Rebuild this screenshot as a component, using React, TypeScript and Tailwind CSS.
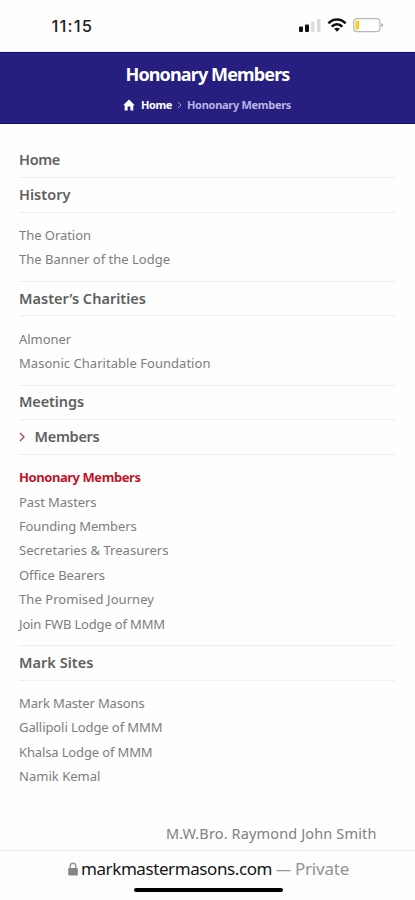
import { useLayoutEffect, useRef, useState } from "react";

type Item = { label: string; width: number };
type Section = Item & { current?: boolean; items?: (Item & { active?: boolean })[] };

/* A single line of text whose tracking is adjusted to fill the given width. */
function Line({ label, width, className = "" }: Item & { className?: string }) {
  const ref = useRef<HTMLSpanElement>(null);
  const [spacing, setSpacing] = useState(0);
  useLayoutEffect(() => {
    const el = ref.current;
    if (!el) return;
    el.style.letterSpacing = "0px";
    const natural = el.getBoundingClientRect().width;
    const next = (width - natural) / label.length;
    el.style.letterSpacing = `${next}px`;
    setSpacing(next);
  }, [label, width]);
  return (
    <span ref={ref} className={`inline-block whitespace-nowrap ${className}`} style={{ letterSpacing: `${spacing}px` }}>
      {label}
    </span>
  );
}

const sections: Section[] = [
  { label: "Home", width: 41 },
  {
    label: "History",
    width: 51.5,
    items: [
      { label: "The Oration", width: 72 },
      { label: "The Banner of the Lodge", width: 151 },
    ],
  },
  {
    label: "Master’s Charities",
    width: 127,
    items: [
      { label: "Almoner", width: 52 },
      { label: "Masonic Charitable Foundation", width: 191.5 },
    ],
  },
  { label: "Meetings", width: 65 },
  {
    label: "Members",
    width: 65,
    current: true,
    items: [
      { label: "Hononary Members", width: 121.5, active: true },
      { label: "Past Masters", width: 77.5 },
      { label: "Founding Members", width: 117.5 },
      { label: "Secretaries & Treasurers", width: 149.5 },
      { label: "Office Bearers", width: 86 },
      { label: "The Promised Journey", width: 135 },
      { label: "Join FWB Lodge of MMM", width: 146 },
    ],
  },
  {
    label: "Mark Sites",
    width: 74.5,
    items: [
      { label: "Mark Master Masons", width: 125.5 },
      { label: "Gallipoli Lodge of MMM", width: 143.5 },
      { label: "Khalsa Lodge of MMM", width: 133.5 },
      { label: "Namik Kemal", width: 81.5 },
    ],
  },
];

function StatusBar() {
  return (
    <div className="flex h-[52px] shrink-0 justify-between border-b border-[#ededf2] pr-[31px] pl-[51.5px]">
      <div className="mt-[15px] h-6 font-['Inter',sans-serif] text-[16.5px] leading-[22px] font-medium text-[#202020]">
        <Line label="11:15" width={41.5} />
      </div>
      <div className="mt-[17px] flex h-4 gap-[6px]">
        <svg width="22" height="16" viewBox="0 0 22 16">
          <rect x="0" y="9.5" width="4" height="5.5" rx="1" fill="#111" />
          <rect x="6" y="7.5" width="4" height="7.5" rx="1" fill="#111" />
          <rect x="12" y="4.5" width="3.5" height="10.5" rx="1" fill="#dedede" />
          <rect x="18" y="2" width="3.5" height="13" rx="1" fill="#dadada" />
        </svg>
        <svg width="20" height="16" viewBox="0 0 20 16" fill="none" stroke="#111" strokeWidth="2.6">
          <path d="M1.4 6.3C6.2 1.2 13.8 1.2 18.6 6.3" />
          <path d="M4.7 9.7C7.8 6.6 12.2 6.6 15.3 9.7" />
          <path d="M10 14.7L7.2 11.8C8.8 10.4 11.2 10.4 12.8 11.8Z" fill="#111" stroke="none" />
        </svg>
        <svg width="31" height="16" viewBox="0 0 31 16">
          <rect x="0.7" y="1.6" width="26.2" height="13" rx="3.4" fill="#fff" stroke="#b9b9b4" strokeWidth="1.2" />
          <rect x="2.3" y="3.7" width="4" height="8.8" rx="1.3" fill="#f5cf35" />
          <path d="M28.4 5.9Q32 8.1 28.4 10.4Z" fill="#aaa" />
        </svg>
      </div>
    </div>
  );
}

function Banner() {
  return (
    <header className="flex h-[72px] shrink-0 flex-col items-center border-y border-[#171070] bg-[#261f80] text-white">
      <h1 className="mt-[9px] h-6 text-[18px] leading-6 font-bold">
        <Line label="Hononary Members" width={164} />
      </h1>
      <nav className="mt-[11px] mr-[1px] flex h-4 items-center text-[11px] leading-4 font-bold">
        <svg className="mr-[6px]" width="12" height="12" viewBox="0 0 12 12" fill="#fff">
          <path d="M6 .5L11.8 6.2H10.3V11.5H7.4V7.6H4.6V11.5H1.7V6.2H.2Z" />
        </svg>
        <Line label="Home" width={31} />
        <svg className="mx-[5px]" width="5" height="8" viewBox="0 0 5 8" fill="none" stroke="#9d98c8">
          <path d="M1 1L4 4L1 7" />
        </svg>
        <Line label="Hononary Members" width={104} className="text-[#b9b4e2]" />
      </nav>
    </header>
  );
}

function Menu() {
  return (
    <ul className="mr-[20px] ml-[19px] pt-[19.4px]">
      {sections.map((section) => (
        <li key={section.label} className="group">
          <div className="flex h-[34.65px] items-center border-b border-[#efefef] pb-[2px] text-[14.5px] leading-5 font-semibold text-[#606060]">
            {section.current && (
              <svg className="mt-[2px] mr-[9.5px]" width="6" height="10" viewBox="0 0 6 10" fill="none" stroke="#ae4050" strokeWidth="1.3">
                <path d="M1 1L5 5L1 9" />
              </svg>
            )}
            <Line label={section.label} width={section.width} />
          </div>
          {section.items && (
            <ul className="border-b border-[#efefef] pt-[10.2px] pb-[9.2px] group-last:border-0">
              {section.items.map((item) => (
                <li
                  key={item.label}
                  className={`flex h-[24.4px] items-center text-[13px] leading-5 ${
                    item.active ? "font-bold text-[#c21328]" : "text-[#7d7d7d]"
                  }`}
                >
                  <Line label={item.label} width={item.width} />
                </li>
              ))}
            </ul>
          )}
        </li>
      ))}
    </ul>
  );
}

function AddressBar() {
  return (
    <footer className="flex h-[50px] shrink-0 flex-col items-center border-t border-[#ececec] bg-[#fdfdfd]">
      <div className="mt-[6px] flex h-6 items-center self-start pl-[68px] text-[17px] leading-6">
        <svg className="mr-[3px]" width="10" height="14" viewBox="0 0 10 14">
          <path d="M2.2 7V4.1C2.2.2 7.8.2 7.8 4.1V7" fill="none" stroke="#929292" strokeWidth="1.4" />
          <rect x="0.2" y="6" width="9.6" height="7.5" rx="1.3" fill="#858585" />
        </svg>
        <Line label="markmastermasons.com" width={191} className="text-[#151515]" />
        <Line label="—" width={14} className="ml-[4px] text-[15px] text-[#969696]" />
        <Line label="Private" width={54} className="ml-[5px] text-[#929292]" />
      </div>
      <div className="mt-[7px] ml-[1px] h-1 w-[149px] rounded-full bg-black" />
    </footer>
  );
}

export default function App() {
  return (
    <div className="flex h-[900px] w-[415px] flex-col overflow-hidden bg-[#fefefe] font-['Noto_Sans','Open_Sans',sans-serif]">
      <StatusBar />
      <Banner />
      <main className="flex min-h-0 flex-1 flex-col justify-between">
        <Menu />
        <p className="mr-[38.5px] mb-[5px] self-end text-[14.5px] leading-6 text-[#818181]">
          <Line label="M.W.Bro. Raymond John Smith" width={210.5} />
        </p>
      </main>
      <AddressBar />
    </div>
  );
}
